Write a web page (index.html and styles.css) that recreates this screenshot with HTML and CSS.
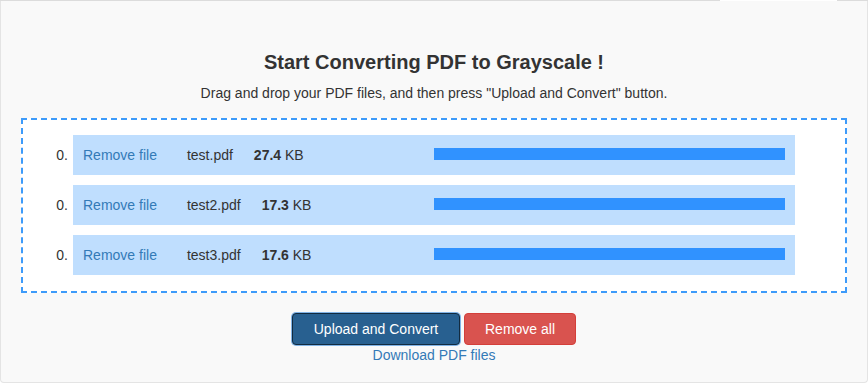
FILE: index.html
```html
<!DOCTYPE html>
<html>
<head>
<meta charset="utf-8">
<link rel="stylesheet" href="styles.css">
</head>
<body>
<div class="topline"></div>
<div class="panel">
  <h2 class="title">Start Converting PDF to Grayscale !</h2>
  <p class="subtitle">Drag and drop your PDF files, and then press "Upload and Convert" button.</p>
  <div class="dropzone">
    <div class="item">
      <span class="num">0.</span>
      <div class="row">
        <div class="info"><a class="remove">Remove file</a><span class="name">test.pdf</span><span class="size"><b>27.4</b> KB</span></div>
        <div class="progress"></div>
      </div>
    </div>
    <div class="item">
      <span class="num">0.</span>
      <div class="row">
        <div class="info"><a class="remove">Remove file</a><span class="name">test2.pdf</span><span class="size"><b>17.3</b> KB</span></div>
        <div class="progress"></div>
      </div>
    </div>
    <div class="item">
      <span class="num">0.</span>
      <div class="row">
        <div class="info"><a class="remove">Remove file</a><span class="name">test3.pdf</span><span class="size"><b>17.6</b> KB</span></div>
        <div class="progress"></div>
      </div>
    </div>
  </div>
  <div class="actions">
    <button class="btn btn-primary">Upload and Convert</button>
    <button class="btn btn-danger">Remove all</button>
  </div>
  <a class="download">Download PDF files</a>
</div>
</body>
</html>
```

FILE: styles.css
```css
html, body {
  margin: 0;
  padding: 0;
  background: #ffffff;
  font-family: "Liberation Sans", Arial, sans-serif;
  color: #333333;
}

.topline {
  height: 1px;
  background: linear-gradient(to right, #dcdcdc 0, #dcdcdc 720px, #ffffff 720px, #ffffff 837px, #dcdcdc 837px);
}

.panel {
  box-sizing: border-box;
  height: 382px;
  background: #f9f9f9;
  border: 1px solid #e4e4e4;
  border-top: none;
  border-radius: 0 0 4px 4px;
  padding-top: 50px;
  display: flex;
  flex-direction: column;
  align-items: center;
}

.title {
  margin: 0;
  font-size: 20px;
  line-height: 22px;
  font-weight: bold;
  color: #333333;
}

.subtitle {
  margin: 11px 0 0;
  font-size: 14px;
  line-height: 18px;
}

.dropzone {
  box-sizing: border-box;
  align-self: stretch;
  margin: 16px 20px 0 20px;
  border: 2px dashed #3d9bfa;
  background: #ffffff;
  padding: 15px 0 16px;
  display: flex;
  flex-direction: column;
  gap: 10px;
}

.item {
  display: grid;
  grid-template-columns: 50px 1fr 50px;
  align-items: center;
}

.num {
  text-align: right;
  padding-right: 5px;
  font-size: 14px;
}

.row {
  height: 40px;
  background: #bfdefe;
  display: flex;
  align-items: center;
  padding: 0 10px;
  font-size: 14px;
}

.info {
  width: 351px;
  flex: none;
  display: flex;
  align-items: center;
  white-space: nowrap;
}

.remove {
  color: #337ab7;
  margin-right: 30px;
}

.name {
  margin-right: 21px;
}

.size b {
  font-weight: bold;
}

.progress {
  flex: 1;
  height: 12px;
  background: #3092ff;
  margin-top: -2px;
}

.actions {
  margin-top: 20px;
  display: flex;
  gap: 4px;
}

.btn {
  font-family: "Liberation Sans", Arial, sans-serif;
  font-size: 14px;
  line-height: 20px;
  height: 32px;
  padding: 5px 12px;
  border-radius: 4px;
  color: #ffffff;
  border: 1px solid transparent;
  box-sizing: border-box;
  white-space: nowrap;
}

.btn-primary {
  background: #286090;
  border-color: #122b40;
  box-shadow: 0 0 0 1px #80b3e6;
  width: 168px;
}

.btn-danger {
  background: #d9534f;
  border-color: #d43f3a;
  width: 112px;
}

.download {
  margin-top: 2px;
  color: #337ab7;
  font-size: 14px;
  line-height: 16px;
}
```
